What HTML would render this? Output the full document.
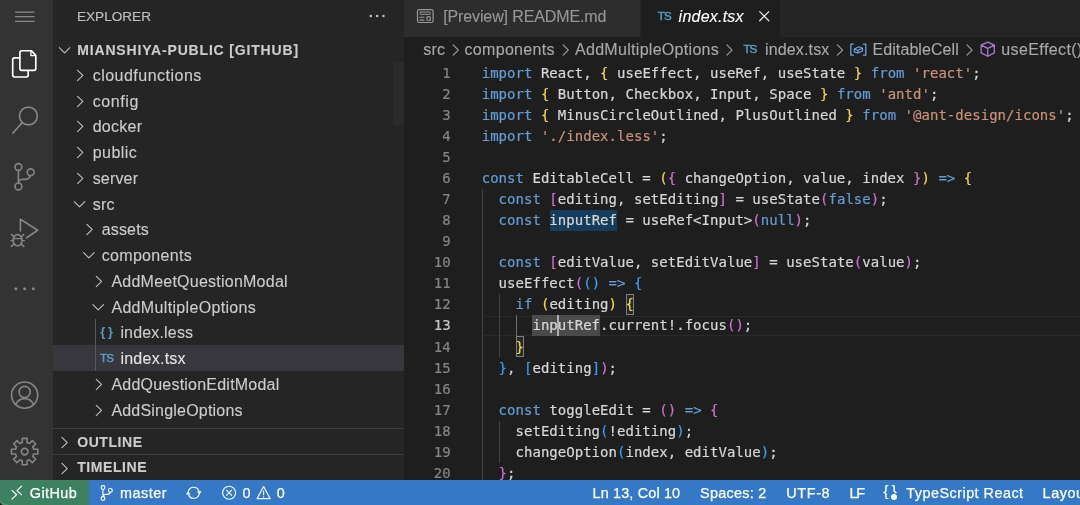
<!DOCTYPE html>
<html lang="en">
<head>
<meta charset="utf-8">
<title>index.tsx — mianshiya-public [GitHub]</title>
<style>
*{box-sizing:border-box}
html,body{margin:0;padding:0}
body{width:1080px;height:505px;overflow:hidden;background:#1e1e1e;font-family:'Liberation Sans', sans-serif;position:relative;-webkit-font-smoothing:antialiased}
#app{position:absolute;left:0;top:0;width:1080px;height:505px;overflow:hidden;background:#1e1e1e;will-change:transform;transform:translateZ(0);backface-visibility:hidden}
.abs,.t,svg,.activitybar,.sidebar,.editor,.statusbar,.tabs,.tab,.breadcrumbs,.code,.row,.pane,.line{position:absolute}
.t{white-space:pre;display:block;-webkit-text-stroke:0.12px}
svg{overflow:visible;display:block}
.activitybar{left:0;top:0;width:53.0px;height:479.6px;background:#333333}
.sidebar{left:53.0px;top:0;width:351.25px;height:479.6px;background:#252526}
.editor{left:404.25px;top:0;width:675.75px;height:479.6px;background:#1e1e1e}
.tabs{left:0;top:0;width:100%;height:36.5px;background:#252526}
.statusbar{left:0;top:479.6px;width:1080px;height:25.4px;background:#3478c6}
.remote{position:absolute;left:0;top:0;height:100%;background:#3d8260}
.row{left:0;width:100%;height:25.75px}
.row.sel{background:#37373d}
.s{fill:none;stroke-linecap:round;stroke-linejoin:round}
.line{left:0;width:100%;height:21.055px;line-height:21.055px;margin-top:0.25px;-webkit-text-stroke:0.2px;font-family:'DejaVu Sans Mono', 'Liberation Mono', monospace;font-size:14px;letter-spacing:0.0273px;color:#d6d6d6;white-space:pre}
.ln{position:absolute;left:0;top:0;width:46.35px;text-align:right}
.src{position:absolute;left:77.45px;top:0}
</style>
</head>
<body>
<div id="app">
<div class="activitybar"><svg style="left:0px;top:0px;width:54px;height:34px" viewBox="0 0 54 34"><path class="s" stroke="#8a8a8a" stroke-width="1.1" stroke-linecap="butt" d="M15.4 12.1H34.1"/><path class="s" stroke="#8a8a8a" stroke-width="1.1" stroke-linecap="butt" d="M15.4 16.6H34.1"/><path class="s" stroke="#8a8a8a" stroke-width="1.1" stroke-linecap="butt" d="M15.4 21.4H34.1"/></svg><svg style="left:0px;top:40px;width:54px;height:48px" viewBox="0 40 54 48"><path class="s" stroke="#ffffff" stroke-width="1.65" d="M19.9 57.8H14.6Q12.7 57.8 12.7 59.7V75.1Q12.7 77 14.6 77H26.3Q28.2 77 28.2 75.1V71.2"/><path class="s" stroke="#ffffff" stroke-width="1.65" d="M21.8 50.7H31.2L35.8 55.3V68.4Q35.8 70.3 33.9 70.3H21.8Q19.9 70.3 19.9 68.4V52.6Q19.9 50.7 21.8 50.7Z"/><path class="s" stroke="#ffffff" stroke-width="1.3" d="M30.9 51.2V55.6H35.3"/></svg><svg style="left:0px;top:96px;width:54px;height:48px" viewBox="0 96 54 48"><circle class="s" stroke="#858585" stroke-width="1.7" cx="28.4" cy="116" r="8.9"/><path class="s" stroke="#858585" stroke-width="1.7" d="M22 122.9L12.8 133.2"/></svg><svg style="left:0px;top:152px;width:54px;height:48px" viewBox="0 152 54 48"><circle class="s" stroke="#858585" stroke-width="1.65" cx="18.4" cy="167" r="3.4"/><circle class="s" stroke="#858585" stroke-width="1.65" cx="18.4" cy="186.4" r="3.4"/><circle class="s" stroke="#858585" stroke-width="1.65" cx="30.7" cy="172.2" r="3.4"/><path class="s" stroke="#858585" stroke-width="1.65" d="M18.4 170.4V183M30.2 175.6Q29.5 179.3 25.5 179.3H22.5Q18.9 179.6 18.4 183"/></svg><svg style="left:0px;top:208px;width:54px;height:48px" viewBox="0 208 54 48"><path class="s" stroke="#858585" stroke-width="1.65" d="M20.4 231V219.2L37.6 230.3L26.6 237.8"/><ellipse class="s" stroke="#858585" stroke-width="1.65" cx="17.6" cy="240.2" rx="4.4" ry="5.6"/><path class="s" stroke="#858585" stroke-width="1.45" d="M13.4 238.6H21.8M13.2 240.6H10.8M22 240.6H24.4M13.6 236.4L11.4 234.4M21.6 236.4L23.8 234.4M13.6 244.4L11.4 246.4M21.6 244.4L23.8 246.4"/></svg><svg style="left:0px;top:276px;width:54px;height:26px" viewBox="0 276 54 26"><circle fill="#858585" cx="15.9" cy="288.8" r="1.55"/><circle fill="#858585" cx="24.65" cy="288.8" r="1.55"/><circle fill="#858585" cx="33.4" cy="288.8" r="1.55"/></svg><svg style="left:0px;top:378px;width:54px;height:36px" viewBox="0 378 54 36"><circle class="s" stroke="#858585" stroke-width="1.65" cx="24.65" cy="395.1" r="13.1"/><circle class="s" stroke="#858585" stroke-width="1.65" cx="24.65" cy="392" r="5.6"/><path class="s" stroke="#858585" stroke-width="1.65" d="M15.6 404.6Q18.4 398.6 24.65 398.6Q30.9 398.6 33.7 404.6"/></svg><svg style="left:0px;top:434px;width:54px;height:36px" viewBox="0 434 54 36"><path class="s" stroke="#858585" stroke-width="1.65" stroke-linejoin="miter" d="M22.23 442.52L22.25 438.42L27.05 438.42L27.07 442.52L29.36 443.47L32.28 440.58L35.67 443.97L32.78 446.89L33.73 449.18L37.83 449.20L37.83 454.00L33.73 454.02L32.78 456.31L35.67 459.23L32.28 462.62L29.36 459.73L27.07 460.68L27.05 464.78L22.25 464.78L22.23 460.68L19.94 459.73L17.02 462.62L13.63 459.23L16.52 456.31L15.57 454.02L11.47 454.00L11.47 449.20L15.57 449.18L16.52 446.89L13.63 443.97L17.02 440.58L19.94 443.47Z"/><circle class="s" stroke="#858585" stroke-width="1.65" cx="24.65" cy="451.6" r="3.3"/></svg></div>
<div class="sidebar"><span class="t" style="left:24.00px;top:7.69px;font-size:13.6px;line-height:18px;color:#bdbdbd;letter-spacing:-0.007px;-webkit-text-stroke:0.2px;">EXPLORER</span><svg style="left:313.0px;top:10px;width:22px;height:12px" viewBox="313.0 10 22 12"><circle fill="#c5c5c5" cx="317.80" cy="16.1" r="1.25"/><circle fill="#c5c5c5" cx="324.15" cy="16.1" r="1.25"/><circle fill="#c5c5c5" cx="330.50" cy="16.1" r="1.25"/></svg><svg style="left:3.0px;top:40px;width:20px;height:20px" viewBox="3.0 40 20 20"><path class="s" stroke="#c0c0c0" stroke-width="1.1" d="M6.30 47.65L11.60 52.95L16.90 47.65"/></svg><span class="t" style="left:24.25px;top:41.45px;font-size:14px;line-height:18px;color:#cccccc;font-weight:bold;letter-spacing:0.828px;">MIANSHIYA-PUBLIC [GITHUB]</span><div class="abs" style="left:339.70px;top:62.4px;width:11.55px;height:62.4px;background:#2b2b2c"></div><div class="row" style="top:61.85px"><svg style="left:0;top:0;width:120px;height:25.75px" viewBox="0 0 120 25.75"><path class="s" stroke="#c0c0c0" stroke-width="1.1" d="M24.55 8.30L29.85 13.45L24.55 18.60"/></svg><span class="t" style="left:39.65px;top:3.06px;font-size:16px;line-height:21px;color:#cccccc;letter-spacing:0.493px;">cloudfunctions</span></div><div class="row" style="top:87.60px"><svg style="left:0;top:0;width:120px;height:25.75px" viewBox="0 0 120 25.75"><path class="s" stroke="#c0c0c0" stroke-width="1.1" d="M24.55 8.30L29.85 13.45L24.55 18.60"/></svg><span class="t" style="left:39.65px;top:3.06px;font-size:16px;line-height:21px;color:#cccccc;letter-spacing:0.599px;">config</span></div><div class="row" style="top:113.35px"><svg style="left:0;top:0;width:120px;height:25.75px" viewBox="0 0 120 25.75"><path class="s" stroke="#c0c0c0" stroke-width="1.1" d="M24.55 8.30L29.85 13.45L24.55 18.60"/></svg><span class="t" style="left:39.65px;top:3.06px;font-size:16px;line-height:21px;color:#cccccc;letter-spacing:0.274px;">docker</span></div><div class="row" style="top:139.10px"><svg style="left:0;top:0;width:120px;height:25.75px" viewBox="0 0 120 25.75"><path class="s" stroke="#c0c0c0" stroke-width="1.1" d="M24.55 8.30L29.85 13.45L24.55 18.60"/></svg><span class="t" style="left:39.65px;top:3.06px;font-size:16px;line-height:21px;color:#cccccc;letter-spacing:0.477px;">public</span></div><div class="row" style="top:164.85px"><svg style="left:0;top:0;width:120px;height:25.75px" viewBox="0 0 120 25.75"><path class="s" stroke="#c0c0c0" stroke-width="1.1" d="M24.55 8.30L29.85 13.45L24.55 18.60"/></svg><span class="t" style="left:39.65px;top:3.06px;font-size:16px;line-height:21px;color:#cccccc;letter-spacing:0.189px;">server</span></div><div class="row" style="top:190.60px"><svg style="left:0;top:0;width:120px;height:25.75px" viewBox="0 0 120 25.75"><path class="s" stroke="#c0c0c0" stroke-width="1.1" d="M21.20 10.65L26.50 15.95L31.80 10.65"/></svg><span class="t" style="left:39.65px;top:3.06px;font-size:16px;line-height:21px;color:#cccccc;letter-spacing:0.286px;">src</span></div><div class="row" style="top:216.35px"><svg style="left:0;top:0;width:120px;height:25.75px" viewBox="0 0 120 25.75"><path class="s" stroke="#c0c0c0" stroke-width="1.1" d="M33.90 8.30L39.20 13.45L33.90 18.60"/></svg><span class="t" style="left:48.65px;top:3.06px;font-size:16px;line-height:21px;color:#cccccc;letter-spacing:0.190px;">assets</span></div><div class="row" style="top:242.10px"><svg style="left:0;top:0;width:120px;height:25.75px" viewBox="0 0 120 25.75"><path class="s" stroke="#c0c0c0" stroke-width="1.1" d="M30.55 10.65L35.85 15.95L41.15 10.65"/></svg><span class="t" style="left:48.65px;top:3.06px;font-size:16px;line-height:21px;color:#cccccc;letter-spacing:0.336px;">components</span></div><div class="row" style="top:267.85px"><svg style="left:0;top:0;width:120px;height:25.75px" viewBox="0 0 120 25.75"><path class="s" stroke="#c0c0c0" stroke-width="1.1" d="M43.25 8.30L48.55 13.45L43.25 18.60"/></svg><span class="t" style="left:58.40px;top:3.06px;font-size:16px;line-height:21px;color:#cccccc;letter-spacing:0.239px;">AddMeetQuestionModal</span></div><div class="row" style="top:293.60px"><svg style="left:0;top:0;width:120px;height:25.75px" viewBox="0 0 120 25.75"><path class="s" stroke="#c0c0c0" stroke-width="1.1" d="M39.90 10.65L45.20 15.95L50.50 10.65"/></svg><span class="t" style="left:58.40px;top:3.06px;font-size:16px;line-height:21px;color:#cccccc;letter-spacing:0.332px;">AddMultipleOptions</span></div><div class="row" style="top:319.35px"><div class="abs" style="left:42.10px;top:0;width:1px;height:25.75px;background:#585858"></div><span class="t" style="left:47.30px;top:3.76px;font-size:12.8px;line-height:17px;color:#5a9bc0;font-weight:bold;letter-spacing:2.831px;-webkit-text-stroke:0;">{}</span><span class="t" style="left:67.40px;top:3.06px;font-size:16px;line-height:21px;color:#cccccc;letter-spacing:0.172px;">index.less</span></div><div class="row sel" style="top:345.10px"><div class="abs" style="left:42.10px;top:0;width:1px;height:25.75px;background:#585858"></div><span class="t" style="left:46.90px;top:5.92px;font-size:11.5px;line-height:15px;color:#5a9bc0;letter-spacing:-0.703px;-webkit-text-stroke:0.5px;">TS</span><span class="t" style="left:67.40px;top:3.06px;font-size:16px;line-height:21px;color:#e2e2e2;letter-spacing:0.257px;">index.tsx</span></div><div class="row" style="top:370.85px"><svg style="left:0;top:0;width:120px;height:25.75px" viewBox="0 0 120 25.75"><path class="s" stroke="#c0c0c0" stroke-width="1.1" d="M43.25 8.30L48.55 13.45L43.25 18.60"/></svg><span class="t" style="left:58.40px;top:3.06px;font-size:16px;line-height:21px;color:#cccccc;letter-spacing:0.223px;">AddQuestionEditModal</span></div><div class="row" style="top:396.60px"><svg style="left:0;top:0;width:120px;height:25.75px" viewBox="0 0 120 25.75"><path class="s" stroke="#c0c0c0" stroke-width="1.1" d="M43.25 8.30L48.55 13.45L43.25 18.60"/></svg><span class="t" style="left:58.40px;top:3.06px;font-size:16px;line-height:21px;color:#cccccc;letter-spacing:0.207px;">AddSingleOptions</span></div><div class="pane" style="left:0;top:428.3px;width:100%;height:26px;border-top:1px solid #3c3c3c"><svg style="left:0;top:0;width:30px;height:26px" viewBox="0 0 30 26"><path class="s" stroke="#c0c0c0" stroke-width="1.1" d="M8.95 8.40L14.25 13.55L8.95 18.70"/></svg><span class="t" style="left:24.25px;top:3.85px;font-size:14px;line-height:18px;color:#cccccc;font-weight:bold;letter-spacing:0.558px;">OUTLINE</span></div><div class="pane" style="left:0;top:454.3px;width:100%;height:26px;border-top:1px solid #3c3c3c"><svg style="left:0;top:0;width:30px;height:26px" viewBox="0 0 30 26"><path class="s" stroke="#c0c0c0" stroke-width="1.1" d="M8.95 8.40L14.25 13.55L8.95 18.70"/></svg><span class="t" style="left:24.25px;top:3.05px;font-size:14px;line-height:18px;color:#cccccc;font-weight:bold;letter-spacing:0.565px;">TIMELINE</span></div></div>
<div class="editor"><div class="tabs"><div class="tab" style="left:0;top:0;width:235.75px;height:36.5px;background:#2d2d2d"><svg style="left:11.75px;top:8px;width:20px;height:17px" viewBox="11.75 8 20 17"><rect class="s" stroke="#9a9a9a" stroke-width="1.2" x="13.25" y="9.7" width="15.6" height="12.8" rx="1.8"/><rect class="s" stroke="#9a9a9a" stroke-width="1.0" x="15.95" y="12.1" width="10.2" height="2.3" rx="0.6"/><path class="s" stroke="#9a9a9a" stroke-width="1.1" stroke-linecap="butt" d="M15.55 17.2H19.75M15.55 20.1H19.75"/><rect class="s" stroke="#9a9a9a" stroke-width="1.1" x="22.65" y="16.9" width="3.4" height="3.4" rx="0.4"/></svg><span class="t" style="left:38.95px;top:5.66px;font-size:16px;line-height:21px;color:#979797;letter-spacing:-0.121px;">[Preview] README.md</span></div><div class="tab" style="left:236.75px;top:0;width:139.00px;height:36.5px;background:#1e1e1e"><span class="t" style="left:16.80px;top:9.32px;font-size:11.5px;line-height:15px;color:#5a9bc0;letter-spacing:-0.703px;-webkit-text-stroke:0.5px;">TS</span><span class="t" style="left:37.60px;top:5.66px;font-size:16px;line-height:21px;color:#ffffff;font-style:italic;letter-spacing:0.232px;">index.tsx</span><svg style="left:115.0px;top:9px;width:16px;height:16px" viewBox="115.0 9 16 16"><path class="s" stroke="#e4e4e4" stroke-width="1.3" d="M118.70 11.6L127.80 20.7M127.80 11.6L118.70 20.7"/></svg></div></div><div class="breadcrumbs" style="left:0;top:36.5px;width:100%;height:25.70px;background:#1e1e1e"><span class="t" style="left:19.00px;top:2.46px;font-size:16px;line-height:21px;color:#a9a9a9;letter-spacing:0.186px;">src</span><span class="t" style="left:60.25px;top:2.46px;font-size:16px;line-height:21px;color:#a9a9a9;letter-spacing:0.314px;">components</span><span class="t" style="left:170.75px;top:2.46px;font-size:16px;line-height:21px;color:#a9a9a9;letter-spacing:0.297px;">AddMultipleOptions</span><span class="t" style="left:339.15px;top:5.82px;font-size:11.5px;line-height:15px;color:#5a9bc0;letter-spacing:-0.903px;-webkit-text-stroke:0.5px;">TS</span><span class="t" style="left:360.75px;top:2.46px;font-size:16px;line-height:21px;color:#a9a9a9;letter-spacing:0.145px;">index.tsx</span><span class="t" style="left:468.25px;top:2.46px;font-size:16px;line-height:21px;color:#a9a9a9;letter-spacing:0.083px;">EditableCell</span><span class="t" style="left:597.05px;top:2.46px;font-size:16px;line-height:21px;color:#a9a9a9;letter-spacing:0.4px;">useEffect() callback</span><svg style="left:0;top:0;width:675.75px;height:25.70px" viewBox="0 0 675.75 25.70"><path class="s" stroke="#a0a0a0" stroke-width="1.15" d="M49.05 7.95L54.25 13.05L49.05 18.15"/><path class="s" stroke="#a0a0a0" stroke-width="1.15" d="M159.05 7.95L164.25 13.05L159.05 18.15"/><path class="s" stroke="#a0a0a0" stroke-width="1.15" d="M322.85 7.95L328.05 13.05L322.85 18.15"/><path class="s" stroke="#a0a0a0" stroke-width="1.15" d="M433.45 7.95L438.65 13.05L433.45 18.15"/><path class="s" stroke="#a0a0a0" stroke-width="1.15" d="M563.05 7.95L568.25 13.05L563.05 18.15"/><path class="s" stroke="#6aa5e0" stroke-width="1.25" d="M449.35 7.10H446.85V18.20H449.35M459.35 7.10H461.85V18.20H459.35"/><path class="s" stroke="#6aa5e0" stroke-width="1.1" d="M450.35 12.10L454.95 9.80L458.55 11.10L458.55 13.90L453.95 16.10L450.35 14.90ZM450.35 12.10L453.95 13.40L458.55 11.10M453.95 13.40V16.10"/><path class="s" stroke="#a77bd0" stroke-width="1.3" d="M583.85 5.10L590.45 8.10V15.90L583.85 19.30L577.25 15.90V8.10ZM577.25 8.10L583.85 11.30L590.45 8.10M583.85 11.30V19.30"/></svg></div><div class="code" style="left:0;top:62.2px;width:100%;height:417.40px;overflow:hidden"><div class="abs" style="left:77.75px;top:253.46px;width:598px;height:20.66px;border-top:1px solid #292929;border-bottom:1px solid #292929"></div><div class="abs" style="left:77.75px;top:126.73px;width:1px;height:298.77px;background:#434343"></div><div class="abs" style="left:94.75px;top:232.00px;width:1px;height:63.16px;background:#434343"></div><div class="abs" style="left:94.75px;top:358.33px;width:1px;height:42.11px;background:#434343"></div><div class="abs" style="left:111.75px;top:253.06px;width:1px;height:21.05px;background:#707070"></div><div class="abs" style="left:145.61px;top:147.48px;width:67.16px;height:21.05px;background:#153c5d"></div><div class="abs" style="left:127.59px;top:253.06px;width:68.26px;height:21.05px;background:#4a4a4a"></div><div class="abs" style="left:221.75px;top:232.00px;width:8px;height:21.05px;border:1px solid #808080;background:#262a20"></div><div class="abs" style="left:111.75px;top:274.11px;width:8px;height:21.05px;border:1px solid #808080;background:#262a20"></div><div class="line" style="top:0.40px"><span class="ln" style="color:#858585">1</span><span class="src"><span style="color:#659cd4">import</span> React, <span style="color:#f5d64a">{</span> useEffect, useRef, useState <span style="color:#f5d64a">}</span> <span style="color:#659cd4">from</span> <span style="color:#c8917a">'react'</span>;</span></div><div class="line" style="top:21.45px"><span class="ln" style="color:#858585">2</span><span class="src"><span style="color:#659cd4">import</span> <span style="color:#f5d64a">{</span> Button, Checkbox, Input, Space <span style="color:#f5d64a">}</span> <span style="color:#659cd4">from</span> <span style="color:#c8917a">'antd'</span>;</span></div><div class="line" style="top:42.51px"><span class="ln" style="color:#858585">3</span><span class="src"><span style="color:#659cd4">import</span> <span style="color:#f5d64a">{</span> MinusCircleOutlined, PlusOutlined <span style="color:#f5d64a">}</span> <span style="color:#659cd4">from</span> <span style="color:#c8917a">'@ant-design/icons'</span>;</span></div><div class="line" style="top:63.56px"><span class="ln" style="color:#858585">4</span><span class="src"><span style="color:#659cd4">import</span> <span style="color:#c8917a">'./index.less'</span>;</span></div><div class="line" style="top:84.62px"><span class="ln" style="color:#858585">5</span><span class="src"></span></div><div class="line" style="top:105.68px"><span class="ln" style="color:#858585">6</span><span class="src"><span style="color:#659cd4">const</span> EditableCell = <span style="color:#f5d64a">(</span><span style="color:#d070d0">{</span> changeOption, value, index <span style="color:#d070d0">}</span><span style="color:#f5d64a">)</span> <span style="color:#659cd4">=&gt;</span> <span style="color:#f5d64a">{</span></span></div><div class="line" style="top:126.73px"><span class="ln" style="color:#858585">7</span><span class="src">  <span style="color:#659cd4">const</span> <span style="color:#d070d0">[</span>editing, setEditing<span style="color:#d070d0">]</span> = useState<span style="color:#d070d0">(</span><span style="color:#659cd4">false</span><span style="color:#d070d0">)</span>;</span></div><div class="line" style="top:147.78px"><span class="ln" style="color:#858585">8</span><span class="src">  <span style="color:#659cd4">const</span> inputRef = useRef&lt;Input&gt;<span style="color:#d070d0">(</span><span style="color:#659cd4">null</span><span style="color:#d070d0">)</span>;</span></div><div class="line" style="top:168.84px"><span class="ln" style="color:#858585">9</span><span class="src"></span></div><div class="line" style="top:189.90px"><span class="ln" style="color:#858585">10</span><span class="src">  <span style="color:#659cd4">const</span> <span style="color:#d070d0">[</span>editValue, setEditValue<span style="color:#d070d0">]</span> = useState<span style="color:#d070d0">(</span>value<span style="color:#d070d0">)</span>;</span></div><div class="line" style="top:210.95px"><span class="ln" style="color:#858585">11</span><span class="src">  useEffect<span style="color:#d070d0">(</span><span style="color:#3b9cf5">(</span><span style="color:#3b9cf5">)</span> <span style="color:#659cd4">=&gt;</span> <span style="color:#3b9cf5">{</span></span></div><div class="line" style="top:232.00px"><span class="ln" style="color:#858585">12</span><span class="src">    <span style="color:#659cd4">if</span> <span style="color:#f5d64a">(</span>editing<span style="color:#f5d64a">)</span> <span style="color:#f5d64a">{</span></span></div><div class="line" style="top:253.06px"><span class="ln" style="color:#c6c6c6">13</span><span class="src">      inputRef.current!.focus<span style="color:#d070d0">(</span><span style="color:#d070d0">)</span>;</span></div><div class="line" style="top:274.11px"><span class="ln" style="color:#858585">14</span><span class="src">    <span style="color:#f5d64a">}</span></span></div><div class="line" style="top:295.17px"><span class="ln" style="color:#858585">15</span><span class="src">  <span style="color:#3b9cf5">}</span>, <span style="color:#3b9cf5">[</span>editing<span style="color:#3b9cf5">]</span><span style="color:#d070d0">)</span>;</span></div><div class="line" style="top:316.22px"><span class="ln" style="color:#858585">16</span><span class="src"></span></div><div class="line" style="top:337.28px"><span class="ln" style="color:#858585">17</span><span class="src">  <span style="color:#659cd4">const</span> toggleEdit = <span style="color:#d070d0">(</span><span style="color:#d070d0">)</span> <span style="color:#659cd4">=&gt;</span> <span style="color:#d070d0">{</span></span></div><div class="line" style="top:358.33px"><span class="ln" style="color:#858585">18</span><span class="src">    setEditing<span style="color:#3b9cf5">(</span>!editing<span style="color:#3b9cf5">)</span>;</span></div><div class="line" style="top:379.39px"><span class="ln" style="color:#858585">19</span><span class="src">    changeOption<span style="color:#3b9cf5">(</span>index, editValue<span style="color:#3b9cf5">)</span>;</span></div><div class="line" style="top:400.44px"><span class="ln" style="color:#858585">20</span><span class="src">  <span style="color:#d070d0">}</span>;</span></div><div class="abs" style="left:152.66px;top:253.06px;width:1.9px;height:21.05px;background:#aeafad"></div></div></div>
<div class="statusbar"><div class="remote" style="width:89.2px"><svg style="left:8px;top:3px;width:18px;height:20px" viewBox="8 3 18 20"><path class="s" stroke="#fff" stroke-width="1.15" d="M11.9 10.40L16.7 14.70L11.9 19.10M21.6 6.20L17.0 10.55L21.6 14.90"/></svg><span class="t" style="left:29.80px;top:4.51px;font-size:14.4px;line-height:19px;color:#ffffff;letter-spacing:0.441px;-webkit-text-stroke:0.25px;">GitHub</span></div><svg style="left:98px;top:0px;width:18px;height:25.4px" viewBox="98 0 18 25.4"><circle class="s" stroke="#fff" stroke-width="1.15" cx="103.0" cy="7.60" r="1.9"/><circle class="s" stroke="#fff" stroke-width="1.15" cx="103.0" cy="18.50" r="1.9"/><circle class="s" stroke="#fff" stroke-width="1.15" cx="110.4" cy="10.40" r="1.9"/><path class="s" stroke="#fff" stroke-width="1.15" d="M103.0 9.60V16.50M110.3 12.40Q110 14.30 107.6 14.40H105.6Q103.3 14.60 103.0 16.50"/></svg><span class="t" style="left:120.00px;top:4.51px;font-size:14.4px;line-height:19px;color:#ffffff;letter-spacing:0.503px;-webkit-text-stroke:0.25px;">master</span><svg style="left:184px;top:0px;width:20px;height:25.4px" viewBox="184 0 20 25.4"><path class="s" stroke="#fff" stroke-width="1.15" d="M188.28 11.84A5.55 5.55 0 0 1 198.78 10.45M199.22 13.76A5.55 5.55 0 0 1 188.72 15.15"/><path fill="#fff" d="M185.90 14.40L188.20 10.90L190.50 14.40Z"/><path fill="#fff" d="M197.00 11.20L199.30 14.70L201.60 11.20Z"/></svg><svg style="left:220px;top:0px;width:18px;height:25.4px" viewBox="220 0 18 25.4"><circle class="s" stroke="#fff" stroke-width="1.15" cx="229.1" cy="12.80" r="6.5"/><path class="s" stroke="#fff" stroke-width="1.1" d="M226.5 10.20L231.7 15.40M231.7 10.20L226.5 15.40"/></svg><span class="t" style="left:242.40px;top:4.51px;font-size:14.4px;line-height:19px;color:#ffffff;-webkit-text-stroke:0.25px;">0</span><svg style="left:255px;top:0px;width:18px;height:25.4px" viewBox="255 0 18 25.4"><path class="s" stroke="#fff" stroke-width="1.15" d="M263.6 6.60L270.2 18.70H257.0Z"/><path class="s" stroke="#fff" stroke-width="1.1" d="M263.6 11.00V14.80M263.6 16.70V16.90"/></svg><span class="t" style="left:276.80px;top:4.51px;font-size:14.4px;line-height:19px;color:#ffffff;-webkit-text-stroke:0.25px;">0</span><span class="t" style="left:592.50px;top:4.51px;font-size:14.4px;line-height:19px;color:#ffffff;letter-spacing:0.166px;-webkit-text-stroke:0.25px;">Ln 13, Col 10</span><span class="t" style="left:700.00px;top:4.51px;font-size:14.4px;line-height:19px;color:#ffffff;letter-spacing:0.287px;-webkit-text-stroke:0.25px;">Spaces: 2</span><span class="t" style="left:786.30px;top:4.51px;font-size:14.4px;line-height:19px;color:#ffffff;letter-spacing:0.630px;-webkit-text-stroke:0.25px;">UTF-8</span><span class="t" style="left:849.60px;top:4.51px;font-size:14.4px;line-height:19px;color:#ffffff;letter-spacing:-1.397px;-webkit-text-stroke:0.25px;">LF</span><span class="t" style="left:883.60px;top:2.84px;font-size:14.6px;line-height:19px;color:#ffffff;letter-spacing:3.250px;-webkit-text-stroke:0.2px;">{}</span><div class="abs" style="left:891.1px;top:14.00px;width:6.4px;height:6.4px;border-radius:50%;background:#fff;box-shadow:0 0 0 1.1px #3478c6"></div><span class="t" style="left:906.30px;top:4.51px;font-size:14.4px;line-height:19px;color:#ffffff;letter-spacing:0.481px;-webkit-text-stroke:0.25px;">TypeScript React</span><span class="t" style="left:1042.60px;top:4.51px;font-size:14.4px;line-height:19px;color:#ffffff;letter-spacing:0.55px;-webkit-text-stroke:0.25px;">Layout: U.S.</span></div>
<svg style="left:0px;top:497px;width:10px;height:8px" viewBox="0 497 10 8"><path fill="#0c0c0c" d="M0 502.5Q0.7 504.3 2.3 505H0Z"/><path class="s" stroke="rgba(255,255,255,0.18)" stroke-width="0.9" d="M0 501.7Q2.2 504.2 7.5 505"/></svg>
</div>
</body>
</html>
